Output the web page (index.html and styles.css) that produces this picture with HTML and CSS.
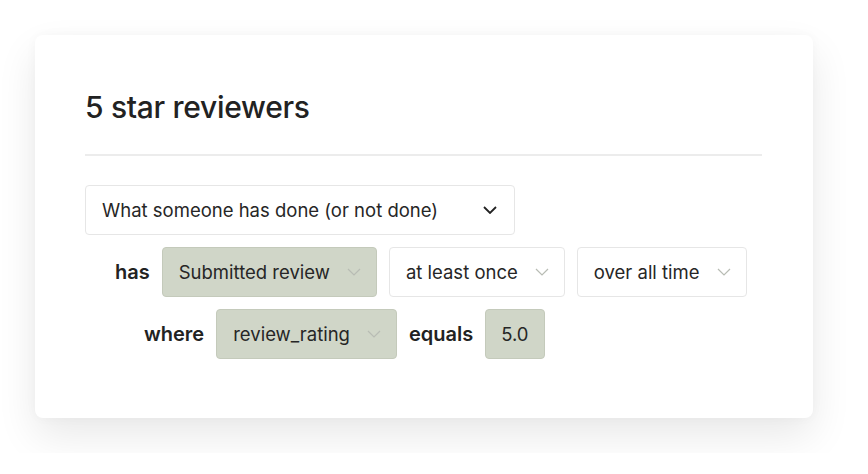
FILE: index.html
```html
<!DOCTYPE html>
<html lang="en">
<head>
  <meta charset="UTF-8" />
  <meta name="viewport" content="width=device-width, initial-scale=1" />
  <title>Segment</title>
  <link rel="stylesheet" href="styles.css">
</head>
<body>
  <div class="card">
    <h1>5 star reviewers</h1>
    <hr class="divider">

    <div class="select main">
      <span>What someone has done (or not done)</span>
      <svg class="chev" viewBox="0 0 14 8"><path d="M1 1l6 6 6-6" /></svg>
    </div>

    <div class="row row-has">
      <span class="word">has</span>
      <div class="select filled">
        <span>Submitted review</span>
        <svg class="chev light" viewBox="0 0 14 8"><path d="M1 1l6 6 6-6" /></svg>
      </div>
      <div class="select">
        <span>at least once</span>
        <svg class="chev light" viewBox="0 0 14 8"><path d="M1 1l6 6 6-6" /></svg>
      </div>
      <div class="select">
        <span>over all time</span>
        <svg class="chev light" viewBox="0 0 14 8"><path d="M1 1l6 6 6-6" /></svg>
      </div>
    </div>

    <div class="row row-where">
      <span class="word">where</span>
      <div class="select filled">
        <span>review_rating</span>
        <svg class="chev light" viewBox="0 0 14 8"><path d="M1 1l6 6 6-6" /></svg>
      </div>
      <span class="word">equals</span>
      <div class="select filled value">
        <span>5.0</span>
      </div>
    </div>
  </div>
</body>
</html>
```

FILE: styles.css
```css
body {
  margin: 0;
  padding: 35px;
  font-family: Inter, 'Noto Sans', sans-serif;
  background: #fff;
  color: #222;
}

.card {
  width: 778px;
  height: 383px;
  box-sizing: border-box;
  padding: 50px 51px 0 50px;
  background: #fff;
  border-radius: 8px;
  box-shadow: 0 18px 40px rgba(0, 0, 0, 0.09), 0 0 12px rgba(0, 0, 0, 0.03);
}

h1 {
  margin: 0;
  font-size: 30px;
  font-weight: 500;
  letter-spacing: -0.3px;
  line-height: 44px;
}

.divider {
  margin: 25px 0 29px 0;
  border: none;
  height: 2px;
  background: #ececec;
}

.select {
  display: inline-flex;
  align-items: center;
  height: 50px;
  box-sizing: border-box;
  padding: 0 15px 0 16px;
  border: 1px solid #e6e6e6;
  border-radius: 4px;
  font-size: 18.5px;
  color: #262626;
  background: #fff;
}

.select.main {
  width: 430px;
  justify-content: space-between;
  padding: 0 17px 0 16px;
}

.select.filled {
  background: #d0d6c8;
  border-color: #c4cabb;
}

.select.value {
  padding: 0 15px;
}

.chev {
  width: 14px;
  height: 8px;
  fill: none;
  stroke: #222;
  stroke-width: 1.8;
}

.chev.light {
  margin-left: 17px;
  stroke: #b8bcb4;
  stroke-width: 1.2;
}

.row {
  display: flex;
  align-items: center;
  gap: 12px;
  margin-top: 12px;
}

.row-has {
  padding-left: 30px;
}

.row-where {
  padding-left: 59px;
}

.word {
  font-size: 20px;
  font-weight: 600;
  color: #222;
}
```
